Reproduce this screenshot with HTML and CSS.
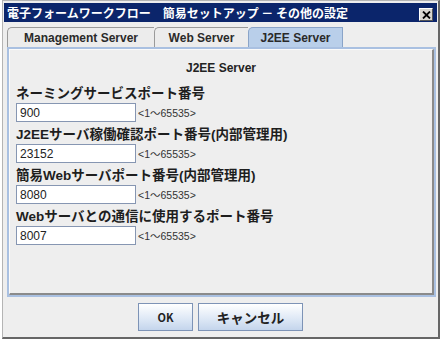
FILE: index.html
```html
<!DOCTYPE html>
<html lang="ja">

<head>
    <meta charset="UTF-8">
    <title>その他の設定</title>
    <link rel="stylesheet" href="styles.css">
</head>

<body>
    <div class="window">
        <div class="titlebar">
            <span class="title">電子フォームワークフロー　簡易セットアップ － その他の設定</span>
            <span class="close">
                <svg width="9" height="8" viewBox="0 0 9 8">
                    <path d="M1 0.5 L8 7.5 M8 0.5 L1 7.5" stroke="#000" stroke-width="1.8" />
                </svg>
            </span>
        </div>
        <div class="tabs">
            <div class="tab">Management Server</div>
            <div class="tab">Web Server</div>
            <div class="tab active">J2EE Server</div>
        </div>
        <div class="panel">
            <div class="panel-inner">
                <div class="heading">J2EE Server</div>
                <div class="field">
                    <div class="label">ネーミングサービスポート番号</div>
                    <div class="input-row"><input class="port" value="900"><span class="range">&lt;1〜65535&gt;</span></div>
                </div>
                <div class="field">
                    <div class="label">J2EEサーバ稼働確認ポート番号(内部管理用)</div>
                    <div class="input-row"><input class="port" value="23152"><span class="range">&lt;1〜65535&gt;</span></div>
                </div>
                <div class="field">
                    <div class="label">簡易Webサーバポート番号(内部管理用)</div>
                    <div class="input-row"><input class="port" value="8080"><span class="range">&lt;1〜65535&gt;</span></div>
                </div>
                <div class="field">
                    <div class="label">Webサーバとの通信に使用するポート番号</div>
                    <div class="input-row"><input class="port" value="8007"><span class="range">&lt;1〜65535&gt;</span></div>
                </div>
            </div>
        </div>
        <div class="buttons">
            <button class="btn ok">OK</button>
            <button class="btn cancel">キャンセル</button>
        </div>
    </div>
</body>

</html>
```
FILE: styles.css
```css
* {
    box-sizing: border-box;
}

body {
    margin: 0;
    background-color: white;
    font-family: "Liberation Sans", "Noto Sans CJK JP", sans-serif;
    color: #222;
}

.window {
    margin-left: 2px;
    width: 438px;
    height: 339px;
    background-color: #eeeeee;
    border: 1px solid #b4b4b4;
    border-right: 2px solid #666;
    border-bottom: 2px solid #666;
    padding: 2px 1px 0 1px;
    display: flex;
    flex-direction: column;
}

.titlebar {
    height: 19px;
    background-color: #0b256b;
    display: flex;
    align-items: flex-start;
    justify-content: space-between;
    padding-left: 3px;
}

.title {
    color: white;
    font-family: "Noto Sans CJK JP", sans-serif;
    font-weight: bold;
    font-size: 12px;
    line-height: 19px;
}

.close {
    margin-top: 5px;
    margin-right: 4px;
    width: 14px;
    height: 13px;
    background-color: #d8d6d0;
    border: 1px solid;
    border-color: #fff #555 #555 #fff;
    display: flex;
    align-items: center;
    justify-content: center;
}

.tabs {
    display: flex;
    margin-top: 5px;
    padding-left: 3px;
    height: 20px;
}

.tab {
    height: 20px;
    padding: 0;
    font-size: 12px;
    font-weight: bold;
    line-height: 20px;
    text-align: center;
    white-space: nowrap;
    background-color: #ececec;
    border: 1px solid #9a9a9a;
    border-bottom: none;
    border-right: none;
    border-top-left-radius: 5px;
    color: #2a2a2a;
}

.tab:nth-child(1) {
    width: 147px;
}

.tab:nth-child(2) {
    width: 94px;
}

.tab.active {
    width: 95px;
    background-color: #b9cfea;
    border-color: #8aa4c8;
    border-right: 1px solid #8aa4c8;
}

.panel {
    height: 250px;
    margin: 0 1px 0 3px;
    border: 2px solid #a9c0e1;
}

.panel-inner {
    height: 100%;
    border-top: 1px solid #fafafa;
    border-left: 1px solid #fafafa;
    border-right: 2px solid #8a8a8a;
    border-bottom: 2px solid #8a8a8a;
    padding: 10px 6px 0 6px;
}

.heading {
    text-align: center;
    font-size: 12px;
    font-weight: bold;
    line-height: 16px;
    margin-bottom: 9px;
}

.field {
    margin-bottom: 4px;
}

.label {
    font-family: "Liberation Sans", "Noto Sans CJK JP", sans-serif;
    font-weight: bold;
    font-size: 13.5px;
    line-height: 18px;
    color: #1e1e1e;
}

.input-row {
    display: flex;
    align-items: center;
    height: 19px;
}

.port {
    width: 120px;
    height: 19px;
    margin: 0;
    border: 1px solid #8696b2;
    background-color: white;
    padding: 0 3px;
    font-family: "Liberation Sans", sans-serif;
    font-size: 12px;
    color: #222;
    outline: none;
}

.range {
    margin-left: 2px;
    font-size: 10.5px;
    color: #333;
}

.buttons {
    display: flex;
    justify-content: center;
    gap: 5px;
    padding-top: 6px;
}

.btn {
    height: 28px;
    margin: 0;
    border: 1px solid #7d93b6;
    background: linear-gradient(#ffffff, #dce7f5 60%, #c4d5ec);
    font-family: "Noto Sans CJK JP", sans-serif;
    font-weight: bold;
    color: #222;
    padding: 0;
}

.btn.ok {
    width: 55px;
    font-size: 11px;
}

.btn.cancel {
    width: 105px;
    font-size: 13.5px;
}
```
